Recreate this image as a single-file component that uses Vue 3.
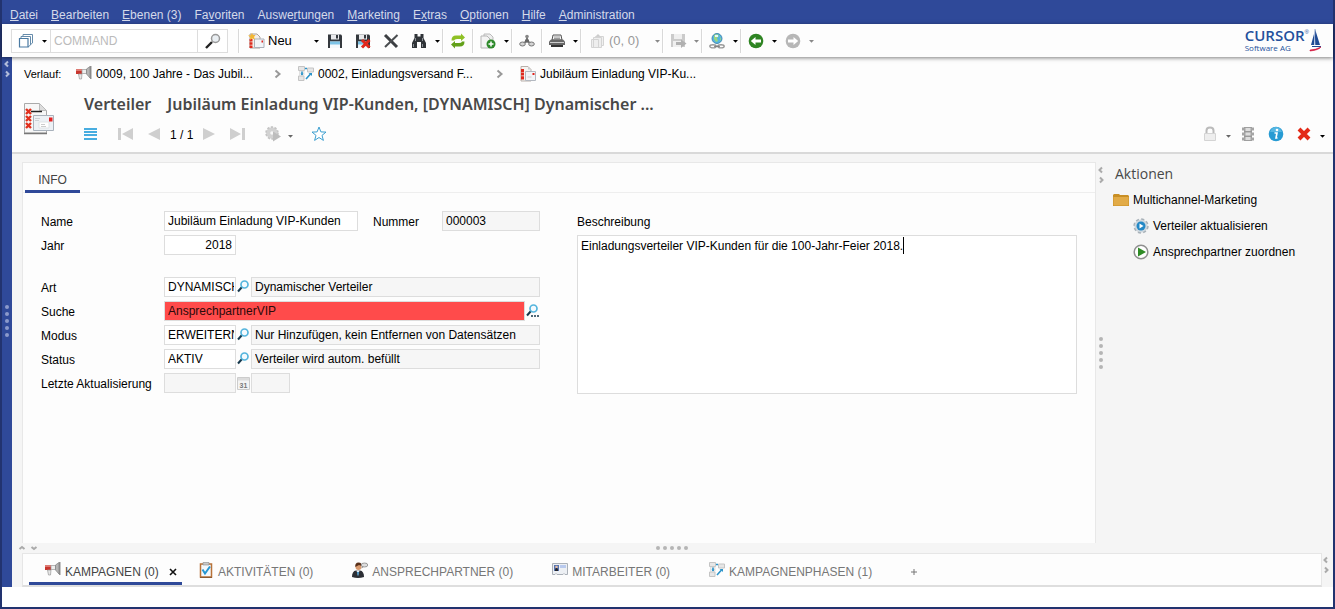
<script setup>
import { ref, reactive, computed, onMounted } from 'vue'

const menu = [
  ['', 'D', 'atei'],
  ['', 'B', 'earbeiten'],
  ['', 'E', 'benen (3)'],
  ['Fa', 'v', 'oriten'],
  ['Auswe', 'r', 'tungen'],
  ['', 'M', 'arketing'],
  ['E', 'x', 'tras'],
  ['', 'O', 'ptionen'],
  ['', 'H', 'ilfe'],
  ['', 'A', 'dministration'],
]

const history = [
  { icon: 'i-mega', text: '0009, 100 Jahre - Das Jubil...' },
  { icon: 'i-phases', text: '0002, Einladungsversand F...' },
  { icon: 'i-list', text: 'Jubiläum Einladung VIP-Ku...' },
]

const tabs = [
  { icon: 'i-mega', text: 'KAMPAGNEN (0)', active: true },
  { icon: 'i-task', text: 'AKTIVITÄTEN (0)' },
  { icon: 'i-person', text: 'ANSPRECHPARTNER (0)' },
  { icon: 'i-card', text: 'MITARBEITER (0)' },
  { icon: 'i-phases', text: 'KAMPAGNENPHASEN (1)' },
]

const form = reactive({
  name: 'Jubiläum Einladung VIP-Kunden',
  number: '000003',
  year: '2018',
  search: 'AnsprechpartnerVIP',
  description: 'Einladungsverteiler VIP-Kunden für die 100-Jahr-Feier 2018.',
})

const lookups = reactive([
  { id: 'art', label: 'Art', code: 'DYNAMISCH', text: 'Dynamischer Verteiler' },
  { id: 'suche', label: 'Suche', wide: true },
  { id: 'modus', label: 'Modus', code: 'ERWEITERN', text: 'Nur Hinzufügen, kein Entfernen von Datensätzen' },
  { id: 'status', label: 'Status', code: 'AKTIV', text: 'Verteiler wird autom. befüllt' },
])

const area = ref(null)
const textWidth = ref(329)
const caret = computed(() => ({ left: `${Math.round(textWidth.value) + 4}px` }))

function measure() {
  const ctx = document.createElement('canvas').getContext('2d')
  const cs = getComputedStyle(area.value)
  ctx.font = `${cs.fontSize} ${cs.fontFamily}`
  textWidth.value = ctx.measureText(form.description).width
}
onMounted(measure)
</script>

<template>
  <svg class="defs" aria-hidden="true">
    <symbol id="i-mega" viewBox="0 0 16 16">
      <path d="M0 3h6v5H0z" fill="#c8362e" /><path d="M0 3h6v2H0z" fill="#dd7a72" />
      <path d="M2.500 8h3.500l-.5 5h-2z" fill="#e6e6e6" stroke="#999" stroke-width=".7" />
      <path d="M6 3.500h4.500v4H6z" fill="#ededed" stroke="#999" stroke-width=".7" />
      <path d="M10.500 3l3.500-2.500V12l-3.500-4z" fill="#b5b5b5" stroke="#808080" stroke-width=".7" />
      <path d="M14.800 0v13" stroke="#777" stroke-width="1.200" />
    </symbol>
    <symbol id="i-phases" viewBox="0 0 16 16">
      <path d="M.5 .5h6v4h-6zM9.500 2h6v4h-6zM.5 10h5.500v4.500H.5z" fill="#e6e6e6" stroke="#c4c4c4" />
      <path d="M1.500 5h4.500v4.500H1.500z" fill="#f2f2f2" stroke="#d2d2d2" stroke-width=".6" />
      <path d="M7 2.500h2M4 5.500v3.500M8 13l4.500-5" stroke="#2b93c9" stroke-width="1.600" fill="none" />
      <path d="M10.500 7H14v3z" fill="#2b93c9" /><path d="M2.500 7.500h3L4 9.500z" fill="#2b93c9" />
    </symbol>
    <symbol id="i-list" viewBox="0 0 16 16">
      <path d="M1 .5h7l3 3V15H1z" fill="#f6f4f2" stroke="#b9b0aa" />
      <path d="M8 .5l3 3H8z" fill="#ccc" />
      <path d="M2.500 3v11" stroke="#df2a1e" stroke-width="3" stroke-dasharray="3 .6" />
      <path d="M5.500 5.500h10v9h-10z" fill="#f3f5f8" stroke="#b3b8c0" />
      <path d="M12.500 7h2v2h-2z" fill="#e2231a" /><path d="M7.500 11h4" stroke="#ccc" />
    </symbol>
    <symbol id="i-task" viewBox="0 0 16 16">
      <path d="M2.500 2h11v13h-11z" fill="#f3f8fc" stroke="#b87238" stroke-width="1.500" />
      <path d="M5 .5h6V3H5z" fill="#c9c9c9" stroke="#888" stroke-width=".6" />
      <path d="M4.500 7.500L7 11.500l5-7" fill="none" stroke="#2596d1" stroke-width="2" />
      <path d="M2 15.500h12" stroke="#8a5a33" />
    </symbol>
    <symbol id="i-person" viewBox="0 0 16 16">
      <path d="M0 15q0-6 4-6.500h4q4 .5 4 6.500q-6 2-12 0z" fill="#2c2f35" />
      <path d="M4.500 8.500h3L6 14z" fill="#fff" /><path d="M6 9.500l1 1-1 4-1-4z" fill="#2d83b9" />
      <circle cx="6.500" cy="5" r="3" fill="#d99a6e" /><path d="M3.300 5q-.5-4.500 3.200-4.500T9.700 4L7 3z" fill="#59301a" />
      <ellipse cx="12.500" cy="3" rx="3.300" ry="2" fill="#ddd" stroke="#888" stroke-width=".8" /><path d="M10 4.500l-.5 2 2-1.500z" fill="#888" />
    </symbol>
    <symbol id="i-card" viewBox="0 0 16 16">
      <path d="M.5 1.500h15v11H13l-1-1-1 1H5l-1-1-1 1H.5z" fill="#edf0f4" stroke="#aab0b8" />
      <path d="M2 3h5v6H2z" fill="#5673b0" /><circle cx="4.500" cy="5" r="1.300" fill="#e3bca5" /><path d="M3 9q0-3 1.500-3T6 9z" fill="#23252b" />
      <path d="M8 3h6v3H8z" fill="#b9caee" />
    </symbol>
    <symbol id="i-look" viewBox="0 0 14 14">
      <path d="M1 11.500L5 7" stroke="#16384c" stroke-width="2" />
      <circle cx="7.500" cy="4.500" r="3.500" fill="#f4fafe" stroke="#55b5dd" stroke-width="1.700" />
    </symbol>
    <symbol id="i-arrow" viewBox="0 0 9 9"><path d="M2 4h5L4.500 6.800z" fill="currentColor" /></symbol>
    <symbol id="i-chev" viewBox="0 0 8 10"><path d="M1.500 1.500L5.500 5l-4 3.500" fill="none" stroke="#999" stroke-width="2" /></symbol>
    <symbol id="i-disk" viewBox="0 0 16 16">
      <path d="M1 1.500h13l1 1V15H1z" fill="#34383d" /><path d="M4 1.500h8v5H4z" fill="#e9eaec" /><path d="M9 2h2v3.500H9z" fill="#34383d" />
      <path d="M3 8.500h10V15H3z" fill="#f3f8fb" /><path d="M3 8.500h10v3H3z" fill="#7cc3e6" />
    </symbol>
    <symbol id="i-split" viewBox="0 0 8 18">
      <path d="M5 1.500L2.500 4 5 6.500M3 11.500L5.500 14 3 16.500" fill="none" stroke="currentColor" stroke-width="2" />
    </symbol>
  </svg>

  <div class="window">
    <nav class="menu">
      <a v-for="m in menu" :key="m.join('')" href="#">{{ m[0] }}<u>{{ m[1] }}</u>{{ m[2] }}</a>
    </nav>

    <header class="toolbar">
      <div class="command">
        <button class="scope" aria-label="Bereich">
          <svg width="16" height="16" viewBox="0 0 16 16"><path d="M5 4V1.500h9.500V10L12 12M3 6V3.500h9.500V12L10 14" fill="#fff" stroke="#668cab" /><path d="M1.500 5.500H10V14H1.500z" fill="#fff" stroke="#4b7ba3" stroke-width="1.200" /></svg>
          <svg class="arrow" width="9" height="9"><use href="#i-arrow" /></svg>
        </button>
        <input type="text" placeholder="COMMAND" aria-label="Befehl" />
        <button class="find" aria-label="Suchen">
          <svg width="16" height="16" viewBox="0 0 16 16"><path d="M1 15l6-6" stroke="#222" stroke-width="2.400" /><circle cx="10.500" cy="5.500" r="4" fill="#e9eef2" stroke="#999" stroke-width="1.500" /></svg>
        </button>
      </div>
      <i class="sep"></i>
      <button class="tb new">
        <svg width="17" height="16" viewBox="0 0 17 16"><path d="M2 1h7l3 3v11H2z" fill="#f4efe9" stroke="#a9a09a" /><path d="M3 6v9" stroke="#df2a1e" stroke-width="3" stroke-dasharray="2.500 .8" /><path d="M6.500 6h9.500v8.500H6.500z" fill="#f3f5f8" stroke="#aab0ba" /><path d="M13.500 7.500h1.500v2h-1.500z" fill="#e2231a" /><path d="M4 0l1 2 2.500 0L6 4l1 2.500-2.800-1L2 7l.3-2.700L0 2.500l2.800-.3z" fill="#f2b734" /></svg>
        Neu
      </button>
      <button class="dd" aria-label="Neu Auswahl"><svg width="9" height="9"><use href="#i-arrow" /></svg></button>
      <button class="tb" aria-label="Speichern"><svg width="16" height="16"><use href="#i-disk" /></svg></button>
      <button class="tb" aria-label="Speichern und schließen">
        <svg width="16" height="16" viewBox="0 0 16 16"><use href="#i-disk" /><path d="M7 7l7.500 7.500M14.500 7L7 14.500" stroke="#e0261b" stroke-width="3" /></svg>
      </button>
      <button class="tb" aria-label="Verwerfen">
        <svg width="16" height="16" viewBox="0 0 16 16"><path d="M2 2l12 12" stroke="#3c3f42" stroke-width="3" /><path d="M14.500 2L2 14" stroke="#4a4d50" stroke-width="2" /></svg>
      </button>
      <button class="tb" aria-label="Suche">
        <svg width="16" height="16" viewBox="0 0 16 16"><path d="M3.500 1h3v2.500h3V1h3v4l2.500 5v5h-5V9H6v6H1v-5l2.500-5z" fill="#303438" /><path d="M4.500 5v3M11.500 5v3M2.500 11v3M11.500 11v3" stroke="#8a8f95" /></svg>
      </button>
      <button class="dd" aria-label="Suche Auswahl"><svg width="9" height="9"><use href="#i-arrow" /></svg></button>
      <i class="sep"></i>
      <button class="tb" aria-label="Aktualisieren">
        <svg width="16" height="16" viewBox="0 0 16 16"><path d="M1.500 7.500Q1.500 2.500 6 2.500h5V.5l4 4L11 8V6H7Q4.500 6 4 7.500z" fill="#8fc126" /><path d="M14.500 8.500q0 5-4.500 5H5v2L1 11.500 5 8v2h4q2.500 0 3-1.500z" fill="#62a019" /></svg>
      </button>
      <i class="sep"></i>
      <button class="tb" aria-label="Dokument anlegen">
        <svg width="16" height="16" viewBox="0 0 16 16"><path d="M4 1h6l3 3v10H4z" fill="#ededed" stroke="#bbb" /><path d="M1 3h6l3 3v9H1z" fill="#f4f4f4" stroke="#b5b5b5" /><circle cx="11" cy="11" r="4.500" fill="#2e8a2b" /><path d="M8.500 11h5M11 8.500v5" stroke="#fff" stroke-width="1.500" /></svg>
      </button>
      <button class="dd" aria-label="Dokument Auswahl"><svg width="9" height="9"><use href="#i-arrow" /></svg></button>
      <i class="sep"></i>
      <button class="tb" aria-label="Beziehungen">
        <svg width="16" height="16" viewBox="0 0 16 16"><path d="M8 3v5L3 11M8 8l5 3" stroke="#777" stroke-width="2" fill="none" /><circle cx="8" cy="3.500" r="1.800" fill="#888" /><path d="M6 6.500h4v3H6z" fill="#666" /><ellipse cx="3.500" cy="11" rx="2.800" ry="2" fill="#d4d4d4" stroke="#777" /><ellipse cx="12.500" cy="11" rx="2.800" ry="2" fill="#d4d4d4" stroke="#777" /></svg>
      </button>
      <i class="sep"></i>
      <button class="tb" aria-label="Drucken">
        <svg width="16" height="16" viewBox="0 0 16 16"><path d="M4 2h8l1 5H3z" fill="#f4f4f4" stroke="#555" /><path d="M5 4h6M5 5.500h6" stroke="#777" stroke-width=".7" /><path d="M2 6.500h12l2 2V12H0V8.500z" fill="#666" /><path d="M1 9.500h14" stroke="#ccc" /><path d="M2 12h12v2H2z" fill="#333" /></svg>
      </button>
      <button class="dd" aria-label="Drucken Auswahl"><svg width="9" height="9"><use href="#i-arrow" /></svg></button>
      <i class="sep"></i>
      <button class="tb clip" disabled>
        <svg width="16" height="16" viewBox="0 0 16 16"><path d="M5.500 3.500h8v9h-8z" fill="#f0f0f0" stroke="#d4d4d4" /><path d="M3.500 4.500h8v10h-8zM1.500 6.500h7v8h-7z" fill="#eee" stroke="#d4d4d4" /><path d="M5.500 3.500l2.500-2.500 2.500 2.500z" fill="#ccc" /></svg>
        (0, 0)
      </button>
      <button class="dd off" aria-label="Ablage Auswahl"><svg width="9" height="9"><use href="#i-arrow" /></svg></button>
      <i class="sep"></i>
      <button class="tb" disabled aria-label="Export">
        <svg width="17" height="16" viewBox="0 0 17 16"><path d="M1 1h14v13H1z" fill="#cbcbcb" /><path d="M4 1h8v5H4zM3 8h10v6H3z" fill="#efefef" /><path d="M6 9h5V6.500l5.500 4-5.500 4.500v-3H6z" fill="#b0b0b0" /></svg>
      </button>
      <button class="dd off" aria-label="Export Auswahl"><svg width="9" height="9"><use href="#i-arrow" /></svg></button>
      <i class="sep"></i>
      <button class="tb" aria-label="Verknüpfung">
        <svg width="16" height="16" viewBox="0 0 16 16"><circle cx="8" cy="5.500" r="5" fill="#55b4e0" stroke="#3c82aa" stroke-width=".9" /><path d="M5 2q4-2 5 1L8 5l1 3-2 1-2-3zM11 4l1 2-1 2z" fill="#9ad67f" /><path d="M6 3h3" stroke="#e4f6fc" stroke-width="2" /><ellipse cx="4" cy="13.300" rx="3.200" ry="1.600" fill="none" stroke="#999" stroke-width="1.400" /><ellipse cx="12" cy="13.300" rx="3.200" ry="1.600" fill="none" stroke="#999" stroke-width="1.400" /><path d="M5 13.300h6" stroke="#777" /></svg>
      </button>
      <button class="dd" aria-label="Verknüpfung Auswahl"><svg width="9" height="9"><use href="#i-arrow" /></svg></button>
      <i class="sep"></i>
      <button class="tb" aria-label="Zurück">
        <svg width="16" height="16" viewBox="0 0 16 16"><circle cx="8" cy="8" r="7.300" fill="#2e8422" /><path d="M2.800 8L7.500 4v2.500H13v3H7.500V12z" fill="#fff" /></svg>
      </button>
      <button class="dd" aria-label="Zurück Auswahl"><svg width="9" height="9"><use href="#i-arrow" /></svg></button>
      <button class="tb" disabled aria-label="Vor">
        <svg width="16" height="16" viewBox="0 0 16 16"><circle cx="8" cy="8" r="7.300" fill="#b7b7b7" /><path d="M13.200 8L8.500 4v2.500H3v3h5.500V12z" fill="#fff" /></svg>
      </button>
      <button class="dd off" aria-label="Vor Auswahl"><svg width="9" height="9"><use href="#i-arrow" /></svg></button>

      <div class="logo">
        <div class="brand"><b>CURSOR</b><span>Software AG</span></div>
        <span class="reg">®</span>
        <svg width="13" height="24" viewBox="0 0 13 24"><path d="M6 1l5 16H6zM5 6v11H2z" fill="#1f4a94" /><path d="M6 1q-1 8 0 16" stroke="#9bb0d4" fill="none" /><path d="M3 18h9v1H3z" fill="#1f4a94" /><path d="M1 22q5 0 11-3-2 3-11 4z" fill="#d3163d" stroke="#d3163d" stroke-width=".6" /></svg>
      </div>
    </header>

    <div class="body">
      <aside class="rail">
        <svg width="8" height="18"><use href="#i-split" /></svg>
        <span class="dots"><i v-for="n in 5" :key="n"></i></span>
      </aside>

      <div class="main">
        <section class="head">
          <nav class="history">
            <span class="lead">Verlauf:</span>
            <template v-for="(h, n) in history" :key="h.text">
              <svg v-if="n" class="chev" width="8" height="10"><use href="#i-chev" /></svg>
              <a href="#"><svg width="16" height="16"><use :href="'#' + h.icon" /></svg>{{ h.text }}</a>
            </template>
          </nav>
          <div class="record">
            <svg class="entity" width="32" height="34" viewBox="0 0 32 34">
              <path d="M.5 1.500h15l7 7V31H.5z" fill="#f7f7f7" stroke="#aaa" /><path d="M15.500 1.500l7 7h-7z" fill="#ddd" stroke="#bbb" />
              <path d="M0 31.500h23" stroke="#777" stroke-width="1.500" /><path d="M7 9.500h11" stroke="#222" stroke-width="1.500" />
              <path d="M2 7l5 5M7 7l-5 5M2 14l5 5M7 14l-5 5M2 21l5 5M7 21l-5 5" stroke="#e1301d" stroke-width="2.400" />
              <path d="M9.500 13.500h20v15h-20z" fill="#edf1f5" stroke="#a9b2bc" /><path d="M25 15.500h3.500v4H25z" fill="#e32323" />
              <path d="M11 16.500h5M11 18.500h4" stroke="#cdd2d6" /><path d="M15 20h10v6H15z" fill="#fff" stroke="#dfe3e6" /><path d="M17 22.500h4M17 24.500h5" stroke="#ccc" />
            </svg>
            <div class="info">
              <h1><span>Verteiler</span>Jubiläum Einladung VIP-Kunden, [DYNAMISCH] Dynamischer ...</h1>
              <div class="pager">
                <button aria-label="Liste"><svg width="13" height="14" viewBox="0 0 13 14"><path d="M0 2h13M0 5h13M0 8h13M0 12h13" stroke="#48ade0" stroke-width="2" /></svg></button>
                <button disabled aria-label="Erster"><svg width="15" height="14" viewBox="0 0 15 14"><path d="M0 1h3v12H0zM15 1v12L4 7z" fill="#cfcfcf" /></svg></button>
                <button disabled aria-label="Vorheriger"><svg width="13" height="14" viewBox="0 0 13 14"><path d="M12 1v12L0 7z" fill="#cfcfcf" /></svg></button>
                <span class="count">1 / 1</span>
                <button disabled aria-label="Nächster"><svg width="13" height="14" viewBox="0 0 13 14"><path d="M0 1v12l12-6z" fill="#cfcfcf" /></svg></button>
                <button disabled aria-label="Letzter"><svg width="15" height="14" viewBox="0 0 15 14"><path d="M12 1h3v12h-3zM0 1v12l11-6z" fill="#cfcfcf" /></svg></button>
                <button class="gear" disabled aria-label="Prozess"><svg width="16" height="16" viewBox="0 0 16 16"><circle cx="7" cy="7" r="5.800" fill="#cfcfcf" stroke="#c4c4c4" stroke-width="2" stroke-dasharray="2.200 1.440" /><circle cx="7" cy="7" r="5.300" fill="#d2d2d2" /><circle cx="7" cy="7" r="1.800" fill="#f7f7f7" /><path d="M8 5.500l8 5-8 5z" fill="#bdbdbd" /></svg></button>
                <button class="dd off2" aria-label="Prozess Auswahl"><svg width="9" height="9"><use href="#i-arrow" /></svg></button>
                <button class="star" aria-label="Favorit"><svg width="16" height="16" viewBox="0 0 16 16"><path d="M8 1l1.900 4.900 5.100.2-4 3.300 1.400 5L8 11.500l-4.400 2.900 1.400-5-4-3.300 5.100-.2z" fill="#fff" stroke="#3c9fd0" /></svg></button>
              </div>
            </div>
            <div class="state">
              <button disabled aria-label="Sperre"><svg width="14" height="16" viewBox="0 0 14 16"><path d="M3.500 8V4.500Q3.500 1.500 7 1.500t3.500 3V8" fill="none" stroke="#bbb" stroke-width="2" /><path d="M1.500 7.500h11v7h-11z" fill="#eee" stroke="#d4d4d4" /></svg></button>
              <button class="dd off2" aria-label="Sperre Auswahl"><svg width="9" height="9"><use href="#i-arrow" /></svg></button>
              <button class="film" aria-label="Ampel"><svg width="12" height="16" viewBox="0 0 12 16"><path d="M2 1h8v14H2z" fill="#999" /><path d="M0 1.500h12v3H0zM0 6.500h12v3H0zM0 11.500h12v3H0z" fill="#a5a5a5" /><path d="M3.500 2h5v3h-5zM3.500 6.500h5v3h-5zM3.500 11h5v3h-5z" fill="#ddd" /></svg></button>
              <button class="infoic" aria-label="Information"><svg width="16" height="16" viewBox="0 0 16 16"><circle cx="8" cy="8" r="7.300" fill="#279bd3" /><path d="M2 6q2-5 6-5t6 5z" fill="#55b6e2" /><circle cx="9" cy="4" r="1.300" fill="#fff" /><path d="M6.500 7h2.500l-1 5h1.500" fill="none" stroke="#fff" stroke-width="1.600" /></svg></button>
              <button aria-label="Schließen"><svg width="14" height="14" viewBox="0 0 14 14"><path d="M2 2l10 10M12 2L2 12" stroke="#e32a17" stroke-width="4" /></svg></button>
              <button class="dd" aria-label="Schließen Auswahl"><svg width="9" height="9"><use href="#i-arrow" /></svg></button>
            </div>
          </div>
        </section>

        <div class="work">
          <section class="panel">
            <div class="tabrow"><button class="tab">INFO</button></div>
            <form class="form" @submit.prevent>
              <div class="fields">
                <div class="row">
                  <label for="name">Name</label>
                  <input id="name" v-model="form.name" class="name" type="text" />
                  <label class="second" for="number">Nummer</label>
                  <input id="number" class="grow" :value="form.number" type="text" readonly />
                </div>
                <div class="row year">
                  <label for="year">Jahr</label>
                  <input id="year" v-model="form.year" class="code right" type="text" />
                </div>
                <div v-for="l in lookups" :key="l.id" class="row">
                  <label :for="l.id">{{ l.label }}</label>
                  <template v-if="l.wide">
                    <input :id="l.id" v-model="form.search" class="grow error" type="text" />
                    <button class="look" type="button" aria-label="Suche wählen"><svg width="14" height="14" viewBox="0 0 14 14"><use href="#i-look" /><path d="M5 12h2M8 12h2M11 12h2" stroke="#16384c" stroke-width="1.500" /></svg></button>
                  </template>
                  <template v-else>
                    <input :id="l.id" v-model="l.code" class="code" type="text" />
                    <button class="look" type="button" :aria-label="l.label + ' wählen'"><svg width="14" height="14"><use href="#i-look" /></svg></button>
                    <input class="grow" :value="l.text" type="text" readonly :aria-label="l.label + ' Text'" />
                  </template>
                </div>
                <div class="row">
                  <label for="updated">Letzte Aktualisierung</label>
                  <input id="updated" class="code" type="text" readonly />
                  <button class="look" type="button" disabled aria-label="Kalender"><svg width="13" height="14" viewBox="0 0 13 14"><path d="M.5 1.500h12v12H.5z" fill="#f4f4f4" stroke="#ccc" /><path d="M1 2h11v2.500H1z" fill="#dcdcdc" /><text x="6.500" y="11.500" text-anchor="middle" class="cal">31</text></svg></button>
                  <input class="time" type="text" readonly aria-label="Uhrzeit" />
                </div>
              </div>
              <div class="desc">
                <label for="desc">Beschreibung</label>
                <div class="areawrap">
                  <textarea id="desc" ref="area" v-model="form.description" @input="measure"></textarea>
                  <i class="caret" :style="caret"></i>
                </div>
              </div>
            </form>
          </section>

          <div class="vsplit">
            <svg width="8" height="18"><use href="#i-split" /></svg>
            <span class="dots"><i v-for="n in 5" :key="n"></i></span>
          </div>

          <aside class="actions">
            <h2>Aktionen</h2>
            <a href="#"><svg width="16" height="16" viewBox="0 0 16 16"><path d="M0 3l1-1h5l1 1h8l1 1v10H0z" fill="#c98f25" /><path d="M.5 5h15v8.500H.5z" fill="#e2ab47" /></svg>Multichannel-Marketing</a>
            <a class="sub" href="#"><svg width="16" height="16" viewBox="0 0 16 16"><circle cx="8" cy="8" r="6.600" fill="#cfd6dc" stroke="#a9b2b9" stroke-width="2.200" stroke-dasharray="3 2.180" /><circle cx="8" cy="8" r="6.200" fill="#cfd8df" /><circle cx="8" cy="8" r="4.500" fill="#2388c6" /><path d="M6.500 5.500l4 2.500-4 2.500z" fill="#fff" /></svg>Verteiler aktualisieren</a>
            <a class="sub" href="#"><svg width="16" height="16" viewBox="0 0 16 16"><circle cx="8" cy="8" r="6.800" fill="#fff" stroke="#8f8f8f" stroke-width="1.500" /><path d="M5 3.500l8 4.500-8 4.500z" fill="#2f8b26" /></svg>Ansprechpartner zuordnen</a>
          </aside>
        </div>

        <div class="hsplit">
          <svg width="20" height="8" viewBox="0 0 20 8"><path d="M1.500 5L4 3l2.500 2M13.500 3L16 5l2.500-2" fill="none" stroke="currentColor" stroke-width="2" /></svg>
          <span class="dots flat"><i v-for="n in 5" :key="n"></i></span>
        </div>

        <div class="bottom">
          <div class="tabs">
            <button v-for="t in tabs" :key="t.text" :class="{ active: t.active }">
              <svg class="ticon" width="16" height="16"><use :href="'#' + t.icon" /></svg>{{ t.text }}
              <svg v-if="t.active" class="close" width="8" height="8" viewBox="0 0 8 8"><path d="M1 1l6 6M7 1L1 7" stroke="#111" stroke-width="1.600" /></svg>
            </button>
            <button class="plus" aria-label="Reiter hinzufügen"><svg width="6" height="6" viewBox="0 0 6 6"><path d="M3 0v6M0 3h6" stroke="#777" /></svg></button>
          </div>
          <svg class="tail" width="8" height="18"><use href="#i-split" /></svg>
        </div>
      </div>
    </div>
  </div>
</template>

<style>
body { background: #fff; }
</style>

<style scoped>
.defs { position: absolute; width: 0; height: 0; }
.window {
  box-sizing: border-box; min-height: 100vh; display: flex; flex-direction: column;
  border: 2px solid #22336f; border-top: 0; padding-bottom: 20px; background: #fff;
  font: 12px/16px "Liberation Sans", Arial, sans-serif; color: #000;
}
.window * { box-sizing: border-box; }
a { color: inherit; text-decoration: none; }
button { font: inherit; color: inherit; background: none; border: 0; padding: 0; margin: 0; }
svg { flex: none; display: block; }
input, textarea { font: inherit; color: inherit; margin: 0; border-radius: 0; outline: 0; }

.menu { display: flex; gap: 13px; height: 24px; padding: 7px 8px 0; background: #2f4999; color: #d5daea; }
.menu a { white-space: nowrap; }

.toolbar {
  position: relative; display: flex; align-items: center; height: 33px; padding: 0 11px 0 9px;
  background: #fdfdfd; box-shadow: 0 1px 4px rgba(0, 0, 0, .5);
}
.command { display: flex; width: 217px; height: 24px; border: 1px solid #ddd; background: #fff; }
.scope { display: flex; align-items: center; width: 39px; padding-left: 6px; gap: 6px; border-right: 1px solid #ddd; }
.command input { flex: 1; min-width: 0; border: 0; padding: 0 3px; background: #fff; }
.command input::placeholder { color: #bbb; opacity: 1; }
.find { display: grid; place-items: center; width: 30px; border-left: 1px solid #ddd; }
.sep { width: 2px; height: 24px; flex: none; background: linear-gradient(90deg, #d9d9d9 50%, #fff 50%); }
.command + .sep { margin: 0 5px 0 10px; }
.tb { display: flex; align-items: center; justify-content: center; width: 28px; height: 28px; flex: none; }
.new { width: 67px; justify-content: flex-start; padding-left: 3px; gap: 3px; font-size: 13px; }
.clip { width: 71px; justify-content: flex-start; padding-left: 8px; gap: 3px; color: #999; font-size: 13px; white-space: nowrap; }
.dd { width: 9px; height: 20px; flex: none; display: grid; place-items: center; }
.off { color: #888; }
.off2 { color: #666; }
.logo { display: flex; margin-left: auto; }
.brand { font-family: "Open Sans", "Noto Sans", sans-serif; color: #24509c; }
.brand b { display: block; font-size: 15px; line-height: 14px; font-weight: 600; }
.brand span { display: block; font-size: 8px; line-height: 12px; }
.reg { font-size: 6px; line-height: 8px; color: #24509c; }

.body { flex: 1; display: flex; }
.rail {
  width: 10px; flex: none; display: flex; flex-direction: column; align-items: center;
  background: #2f4999; color: #b3bddb; padding: 3px 0 24px;
}
.dots { display: flex; flex-direction: column; gap: 3px; margin: auto; }
.dots i { width: 4px; height: 4px; border-radius: 2px; background: #b5b5b5; }
.rail .dots i { background: #8c9acb; }
.flat { flex-direction: row; }
.main { flex: 1; min-width: 0; display: flex; flex-direction: column; background: #f5f5f5; }

.head { height: 97px; background: #fdfdfd; border-bottom: 2px solid #d9d9d9; padding: 9px 6px 0 12px; }
.history { display: flex; align-items: center; height: 16px; white-space: nowrap; }
.lead { width: 52px; font-size: 11px; }
.history a { display: flex; gap: 4px; width: 187px; }
.chev { margin: 0 16px 0 11px; }
.history a:last-child { width: auto; }
.record { display: flex; margin-top: 12px; }
.entity { margin-top: 8px; }
.info { margin-left: 28px; flex: 1; min-width: 0; }
h1 { margin: 0; font: 600 16px/20px "Noto Sans", "Open Sans", sans-serif; color: #484848; white-space: nowrap; }
h1 span { margin-right: 16px; }
.pager { display: flex; align-items: center; height: 20px; margin-top: 10px; }
.pager button:nth-child(2) { margin: 0 15px 0 21px; }
.count { width: 24px; margin: 0 9px; white-space: nowrap; padding-top: 2px; }
.pager button:nth-child(6) { margin: 0 20px 0 14px; }
.gear { margin-right: 5px; }
.pager .dd, .state .dd { padding-top: 3px; }
.star { margin-left: 16px; }
.state { display: flex; align-items: center; height: 20px; margin-top: 30px; }
.state .dd { margin-left: 7px; }
.film { margin-left: 9px; }
.infoic { margin: 0 13px 0 14px; }

.work { flex: 1; display: flex; padding: 8px 0 0 10px; }
.panel { flex: 1; min-width: 0; border: 1px solid #e8e8e8; border-bottom: 0; background: #fdfdfd; }
.tabrow { height: 30px; border-bottom: 1px solid #eee; padding-left: 2px; }
.tab { width: 55px; height: 30px; padding-top: 7px; color: #444; border-bottom: 3px solid #2f4999; }
.form { display: flex; padding: 18px 18px 0; gap: 37px; }
.fields { width: 499px; flex: none; }
.row { display: flex; height: 20px; margin-bottom: 4px; }
.year { margin-bottom: 22px; }
.row label { width: 123px; padding-top: 3px; white-space: nowrap; }
.row .second { width: 84px; padding-left: 15px; }
.row input { height: 20px; padding: 0 3px; border: 1px solid #ddd; background: #fff; }
.row input:read-only { background: #f6f6f6; }
.row .name { width: 194px; }
.row .grow { flex: 1; min-width: 0; }
.row .code { width: 72px; padding-right: 1px; }
.row .time { width: 39px; }
.row .right { text-align: right; padding-right: 3px; }
.row .error { background: #ff4b4b; color: #2b0a0a; }
.look { width: 15px; display: grid; place-items: center; }
.cal { font: bold 7px "Liberation Sans", Arial, sans-serif; fill: #777; }
.desc { flex: 1; min-width: 0; padding-top: 3px; }
.desc label { display: block; height: 21px; }
.areawrap { position: relative; height: 159px; }
textarea { display: block; width: 100%; height: 100%; padding: 2px 3px; border: 1px solid #ddd; background: #fff; resize: none; }
.caret { position: absolute; top: 2px; width: 1px; height: 17px; background: #000; }

.vsplit, .hsplit, .tail { color: #aaa; }
.vsplit { width: 10px; flex: none; display: flex; flex-direction: column; align-items: center; padding: 4px 0 22px; }
.actions { width: 227px; flex: none; padding: 2px 0 0 7px; }
h2 { margin: 0 0 3px 2px; font: 400 14px/20px "Open Sans", "Noto Sans", sans-serif; color: #484848; }
.actions a { display: flex; align-items: center; gap: 4px; height: 26px; }
.actions .sub { padding-left: 20px; }

.hsplit { display: flex; align-items: center; height: 10px; padding: 0 28px 0 6px; }
.bottom { display: flex; height: 34px; padding-left: 10px; }
.tabs { flex: 1; display: flex; border: 1px solid #e6e6e6; border-bottom: 2px solid #dedede; background: #fdfdfd; padding-left: 6px; }
.tabs button { display: flex; align-items: center; gap: 4px; height: 31px; padding: 7px 23px 0 16px; color: #777; white-space: nowrap; border-bottom: 3px solid transparent; }
.tabs .active { width: 153px; padding-right: 0; color: #444; border-color: #2f4999; }
.ticon { margin-bottom: 3px; }
.close { margin-left: 6px; }
.tabs .plus { padding: 8px 10px 0 16px; }
.tail { margin: 3px 3px 0 0; }
</style>
